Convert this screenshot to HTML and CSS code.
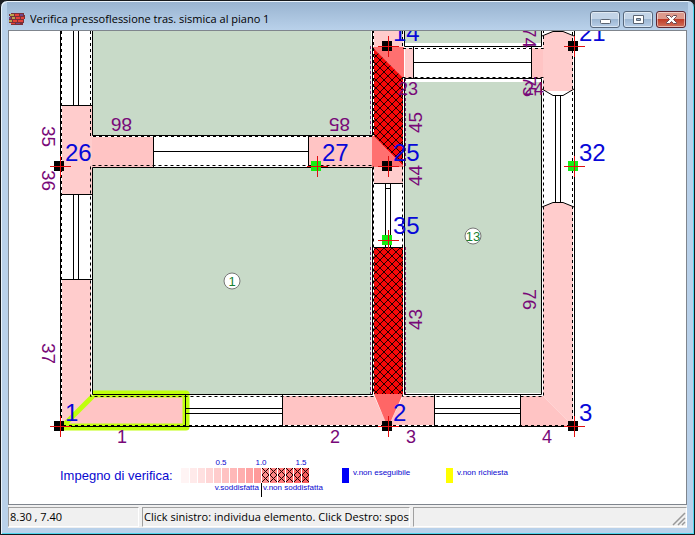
FILE: index.html
```html
<!DOCTYPE html>
<html lang="it">
<head>
  <meta charset="UTF-8" />
  <meta name="viewport" content="width=device-width, initial-scale=1" />
  <title>Verifica pressoflessione tras. sismica al piano 1</title>
  <link rel="stylesheet" href="styles.css">
</head>
<body>
<div class="window">
  <header class="titlebar">
    <svg class="app-icon" width="16" height="12" viewBox="0 0 16 12" aria-hidden="true">
      <path fill="#7a3038" d="M2 0h13v2h1v4h-1v4h-1v2H2v-2H0V6h1V3H0V1h2z"/>
      <path fill="#b9a34c" d="M1 1h4v2H1zM0 7h3v2H0zM3 4h3v2H3z"/>
      <path fill="#e4423a" d="M6 1h4v2H6zM7 4h4v2H7zM4 7h4v2H4zM9 7h5v2H9zM2 10h4v1H2zM12 4h3v2h-3z"/>
      <path fill="#70468c" d="M11 1h3v2h-3zM7 10h4v1H7zM0 4h2v2H0z"/>
    </svg>
    <h1>Verifica pressoflessione tras. sismica al piano 1</h1>
    <div class="window-buttons">
      <button class="win-btn" aria-label="Riduci a icona">
        <svg width="28" height="15" viewBox="0 0 28 15"><rect x="9.500" y="7.500" width="10" height="4" rx="1" fill="#fff" stroke="#5b6472"/></svg>
      </button>
      <button class="win-btn" aria-label="Ingrandisci">
        <svg width="28" height="15" viewBox="0 0 28 15"><path d="M9.500 3.500h10v8h-10zM12.500 6.500v2h4v-2z" fill="#fff" fill-rule="evenodd" stroke="#5b6472"/></svg>
      </button>
      <button class="win-btn close" aria-label="Chiudi">
        <svg width="28" height="15" viewBox="0 0 28 15"><path d="M9.500 3.500h3l2 2 2-2h3v1l-3 3 3 3v1h-3l-2-2-2 2h-3v-1l3-3-3-3z" fill="#fff" stroke="#6b4a52"/></svg>
      </button>
    </div>
  </header>

  <main class="canvas">
    <svg class="plan" viewBox="9 31 677 417" role="img" aria-label="Pianta del piano 1">
      <defs>
        <pattern id="hatch" width="8" height="8" patternUnits="userSpaceOnUse">
          <rect width="8" height="8" fill="#f60808"/>
          <path d="M-1 -1L9 9M-1 9L9 -1" stroke="#200" stroke-width="1"/>
        </pattern>
        <g id="cross"><path class="cross" d="M-10 .5H11M.5 -10V11"/></g>
        <g id="node"><rect x="-6" y="-5" width="10" height="10"/><use href="#cross"/></g>
        <g id="node-free"><rect x="-6" y="-5" width="10" height="10" fill="#12ee12"/><use href="#cross"/></g>
      </defs>

      <!-- rooms -->
      <g fill="#c8dac8">
        <path d="M93 31h279v104H93zM93 168h279v226H93zM405 31h136v12H405zM405 82h136v311H405z"/>
      </g>
      <path fill="#fff" d="M371 31h34v364h-34z"/>
      <path class="over" d="M370.500 46V136M405.500 78V166M370.500 247V394M405.500 247V394"/>

      <!-- wall panels -->
      <g fill="#ffcccc">
        <path d="M62 105h30v89H62zM62 279h29v118L62 426zM374 31h29v16h-29zM374 167h29v16h-29zM405 48h8v30h-8z"/>
        <path d="M543 36L553 31H563L573 36V91H543zM543 206L553 203H563L573 206V426L543 396z"/>
      </g>
      <g fill="#ffc4c4">
        <path d="M92 137h61v30H92zM309 137h64v30h-64zM532 48h11v30h-11zM283 396h91l13 29H283zM403 396h31v29h-45zM521 396h22l30 30h-52zM92 396h93v30H62z"/>
      </g>
      <path fill="url(#hatch)" d="M374 48L403 77V166L374 137zM374 247h29v147h-29z"/>
      <path fill="#ff7070" d="M373 47h31v31h-1L373 48zM372 136h2L404 167H372z"/>
      <path fill="#ff6666" d="M374 394h29l-13 29h-4z"/>

      <!-- selected panel -->
      <path d="M93 394H186V427H62" fill="none" stroke="#bfff0d" stroke-width="7" stroke-linejoin="round"/>
      <path d="M63 426L93 396" stroke="#bfff0d" stroke-width="5"/>

      <!-- wall edges -->
      <g class="edge">
        <path d="M60.500 31V426.500H574.500V31"/>
        <path d="M92.500 31V135.500H372.500V31M92.500 167.500H372.500V394.500H92.500z"/>
        <path d="M404.500 31V46.500H541.500V31M404.500 78.500H541.500V394.500H404.500z"/>
      </g>
      <g class="edge dash">
        <path d="M61.500 31V425.500H572.500V31"/>
        <path d="M90.500 31V136.500H373.500V31M373.500 396.500H90.500V165.500H373.500V394"/>
        <path d="M402.500 31V48.500H543.500V31M402.500 77.500H543.500V396.500H402.500z"/>
      </g>

      <!-- openings -->
      <g class="edge">
        <path d="M73.500 31V105M78.500 31V105M61 105.500H92M61 194.500H92M73.500 194V279M78.500 194V279M61 279.500H92"/>
        <path d="M153.500 136V167M153 151.500H308M308.500 136V167"/>
        <path d="M413.500 47V78M413 62.500H531M531.500 47V78"/>
        <path d="M374 183.500H403M385.500 183V247M390.500 183V247M385 188.500H390M374 247.500H403"/>
        <path d="M185.500 395V426M185 408.500H282M185 413.500H282M282.500 395V426"/>
        <path d="M434.500 395V426M434 408.500H520M434 413.500H520M520.500 395V426"/>
        <path d="M542 36L553 31.500H563L574 36M542 89L553 95.500H563L574 89M555.500 95V203M560.500 95V203M542 207L553 202.500H563L574 207"/>
      </g>

      <!-- panel numbers -->
      <g class="panel-no">
        <text x="117" y="443">1</text>
        <text x="330" y="443">2</text>
        <text x="406" y="443">3</text>
        <text x="542" y="443">4</text>
        <text x="398" y="95">23</text>
        <text x="524" y="95">24</text>
      </g>
      <g class="panel-no turned">
        <text transform="translate(42 126) rotate(90)">35</text>
        <text transform="translate(42 170) rotate(90)">36</text>
        <text transform="translate(42 343) rotate(90)">37</text>
        <text transform="translate(523 27) rotate(90)">74</text>
        <text transform="translate(523 76) rotate(90)">75</text>
        <text transform="translate(523 289) rotate(90)">76</text>
        <text transform="translate(132 118) rotate(180)">86</text>
        <text transform="translate(350 118) rotate(180)">85</text>
        <text transform="translate(422 133) rotate(-90)">45</text>
        <text transform="translate(422 186) rotate(-90)">44</text>
        <text transform="translate(422 330) rotate(-90)">43</text>
      </g>

      <!-- room numbers -->
      <g class="room-no">
        <circle cx="232" cy="281" r="8"/><text x="232" y="286">1</text>
        <circle cx="473" cy="236" r="8"/><text x="473" y="241">13</text>
      </g>

      <g class="node-no">
        <text x="65" y="161">26</text>
        <text x="322" y="161">27</text>
        <text x="393" y="161">25</text>
        <text x="579" y="161">32</text>
        <text x="393" y="41">14</text>
        <text x="579" y="41">21</text>
        <text x="393" y="234">35</text>
        <text x="65" y="421">1</text>
        <text x="393" y="421">2</text>
        <text x="579" y="421">3</text>
      </g>

      <use href="#node" x="60" y="166"/>
      <use href="#node" x="60" y="426"/>
      <use href="#node" x="388" y="46"/>
      <use href="#node" x="388" y="166"/>
      <use href="#node" x="388" y="426"/>
      <use href="#node" x="574" y="46"/>
      <use href="#node" x="574" y="426"/>
      <use href="#node-free" x="317" y="166"/>
      <use href="#node-free" x="388" y="240"/>
      <use href="#node-free" x="574" y="166"/>
    </svg>

    <section class="legend">
      <h2>Impegno di verifica:</h2>
      <div class="scale">
        <span class="tick t05">0.5</span>
        <span class="tick t10">1.0</span>
        <span class="tick t15">1.5</span>
        <svg class="bars" width="128" height="15" viewBox="0 0 128 15" aria-hidden="true">
          <path fill="#fff4f4" d="M0 0h8v15H0z"/>
          <path fill="#ffeaea" d="M9 0h7v15H9z"/>
          <path fill="#ffe0e0" d="M17 0h7v15h-7z"/>
          <path fill="#ffd6d6" d="M25 0h7v15h-7z"/>
          <path fill="#ffcccc" d="M33 0h7v15h-7z"/>
          <path fill="#ffc2c2" d="M41 0h7v15h-7z"/>
          <path fill="#ffb8b8" d="M49 0h7v15h-7z"/>
          <path fill="#ffaeae" d="M57 0h7v15h-7z"/>
          <path fill="#ffa4a4" d="M65 0h7v15h-7z"/>
          <path fill="#ff9a9a" d="M73 0h7v15h-7z"/>
          <path fill="#ff9090" d="M81 0h7v15h-7z"/>
          <path fill="#ff8686" d="M89 0h7v15h-7z"/>
          <path fill="#ff7c7c" d="M97 0h7v15h-7z"/>
          <path fill="#ff7272" d="M105 0h7v15h-7z"/>
          <path fill="#ff6868" d="M113 0h7v15h-7z"/>
          <path fill="#f85e5e" d="M121 0h7v15h-7z"/>
          <path fill="none" stroke="#200" d="M81 0l7 7-7 7M88 0l-7 7 7 7M89 0l7 7-7 7M96 0l-7 7 7 7M97 0l7 7-7 7M104 0l-7 7 7 7M105 0l7 7-7 7M112 0l-7 7 7 7M113 0l7 7-7 7M120 0l-7 7 7 7M121 0l7 7-7 7M128 0l-7 7 7 7"/>
        </svg>
        <span class="caption ok">v.soddisfatta</span>
        <span class="caption ko">v.non soddisfatta</span>
      </div>
      <div class="key"><span class="swatch blue"></span>v.non eseguibile</div>
      <div class="key"><span class="swatch yellow"></span>v.non richiesta</div>
    </section>
  </main>

  <footer class="statusbar">
    <span class="pane coords">8.30 , 7.40</span>
    <span class="pane hint">Click sinistro: individua elemento. Click Destro: sposta</span>
    <span class="pane rest">
      <svg width="14" height="14" viewBox="0 0 14 14" aria-hidden="true"><path d="M1 13L13 1M6 13L13 6M10 13L13 10" stroke="#999" stroke-width="1.500"/></svg>
    </span>
  </footer>
</div>
</body>
</html>
```
FILE: styles.css
```css
* {
  box-sizing: border-box;
}
body {
  margin: 0;
  background: #1c1f24;
  font-family: 'Open Sans', 'Noto Sans', sans-serif;
  color: #000;
}
.window {
  min-height: 100vh;
  display: flex;
  flex-direction: column;
  padding: 0 7px 6px 7px;
  background: #b9d1ea;
  border: 1px solid #15181c;
  border-radius: 7px 7px 0 0;
  box-shadow: inset 1px 1px 0 #eaf3fb, inset -1px -1px 0 #4fd6ee;
}
.titlebar {
  display: flex;
  align-items: center;
  gap: 5px;
  height: 28px;
  margin: 1px -1px 0 -1px;
  padding: 6px 2px 0 2px;
  background: linear-gradient(#99b4d1, #b9d1ea);
}
.titlebar h1 {
  flex: 1;
  margin: 0;
  font-size: 11px;
  font-weight: 400;
  line-height: 16px;
  white-space: nowrap;
  overflow: hidden;
}
.window-buttons {
  display: flex;
  gap: 3px;
}
.win-btn {
  display: block;
  padding: 0;
  border: 1px solid #56677c;
  border-radius: 3px;
  background: linear-gradient(#c3d4e7 50%, #9cb6d2 50%, #b9cfe8);
  box-shadow: inset 0 0 0 1px rgba(255,255,255,0.5);
}
.win-btn svg {
  display: block;
}
.win-btn.close {
  border-color: #5c2430;
  background: linear-gradient(#dd9a8c 45%, #c03c28 50%, #d0705a);
}
.canvas {
  flex: 1;
  background: #fff;
  border: 1px solid #7f858d;
}
.plan {
  display: block;
  width: 100%;
  height: auto;
  font-family: 'Liberation Sans', Arial, sans-serif;
}
.edge {
  fill: none;
  stroke: #000;
  stroke-width: 1;
}
.dash {
  stroke-dasharray: 3 3;
}
.over {
  fill: none;
  stroke: #7a2878;
  stroke-dasharray: 3 2;
}
.cross {
  stroke: #e01010;
  stroke-width: 1;
}
.panel-no {
  fill: #780878;
  font-size: 18px;
}
.turned {
  font-size: 19px;
}
.node-no {
  fill: #0808d8;
  font-size: 24px;
}
.room-no circle {
  fill: #fff;
  stroke: #777;
}
.room-no text {
  fill: #188030;
  font-size: 13px;
  text-anchor: middle;
}
.legend {
  display: flex;
  align-items: flex-start;
  padding: 10px 0 5px 51px;
  font: 8px/10px 'Liberation Sans', Arial, sans-serif;
  color: #0808d0;
  white-space: nowrap;
}
.legend h2 {
  margin: 10px 0 0 0;
  width: 121px;
  font-size: 13px;
  font-weight: 400;
  line-height: 16px;
}
.scale {
  display: grid;
  grid-template-columns: repeat(16, 8px);
  grid-template-rows: 10px 15px 14px;
  margin-right: 33px;
}
.tick {
  grid-row: 1;
  text-align: center;
}
.t05 {
  grid-column: 5 / 7;
}
.t10 {
  grid-column: 10 / 12;
}
.t15 {
  grid-column: 15 / 17;
}
.bars {
  grid-row: 2;
  grid-column: 1 / -1;
}
.caption {
  grid-row: 3;
}
.ok {
  display: flex;
  justify-content: flex-end;
  grid-column: 1 / 11;
  margin-right: -1px;
  padding-right: 2px;
  border-right: 1px solid #000;
}
.ko {
  grid-column: 11 / 17;
  padding-left: 2px;
}
.key {
  display: flex;
  gap: 4px;
  margin-top: 10px;
  width: 104px;
}
.swatch {
  width: 7px;
  height: 15px;
}
.blue {
  background: #0000f8;
}
.yellow {
  background: #ffff00;
}
.statusbar {
  display: flex;
  gap: 3px;
  height: 23px;
  padding-top: 2px;
  background: #f0f0f0;
  font-size: 11px;
  line-height: 18px;
}
.pane {
  height: 20px;
  padding-left: 1px;
  border: 1px solid #a0a0a0;
  border-right-color: #fff;
  border-bottom-color: #fff;
  overflow: hidden;
  white-space: nowrap;
}
.coords {
  width: 131px;
}
.hint {
  width: 268px;
}
.rest {
  flex: 1;
  display: flex;
  justify-content: flex-end;
  align-items: flex-end;
}
```
